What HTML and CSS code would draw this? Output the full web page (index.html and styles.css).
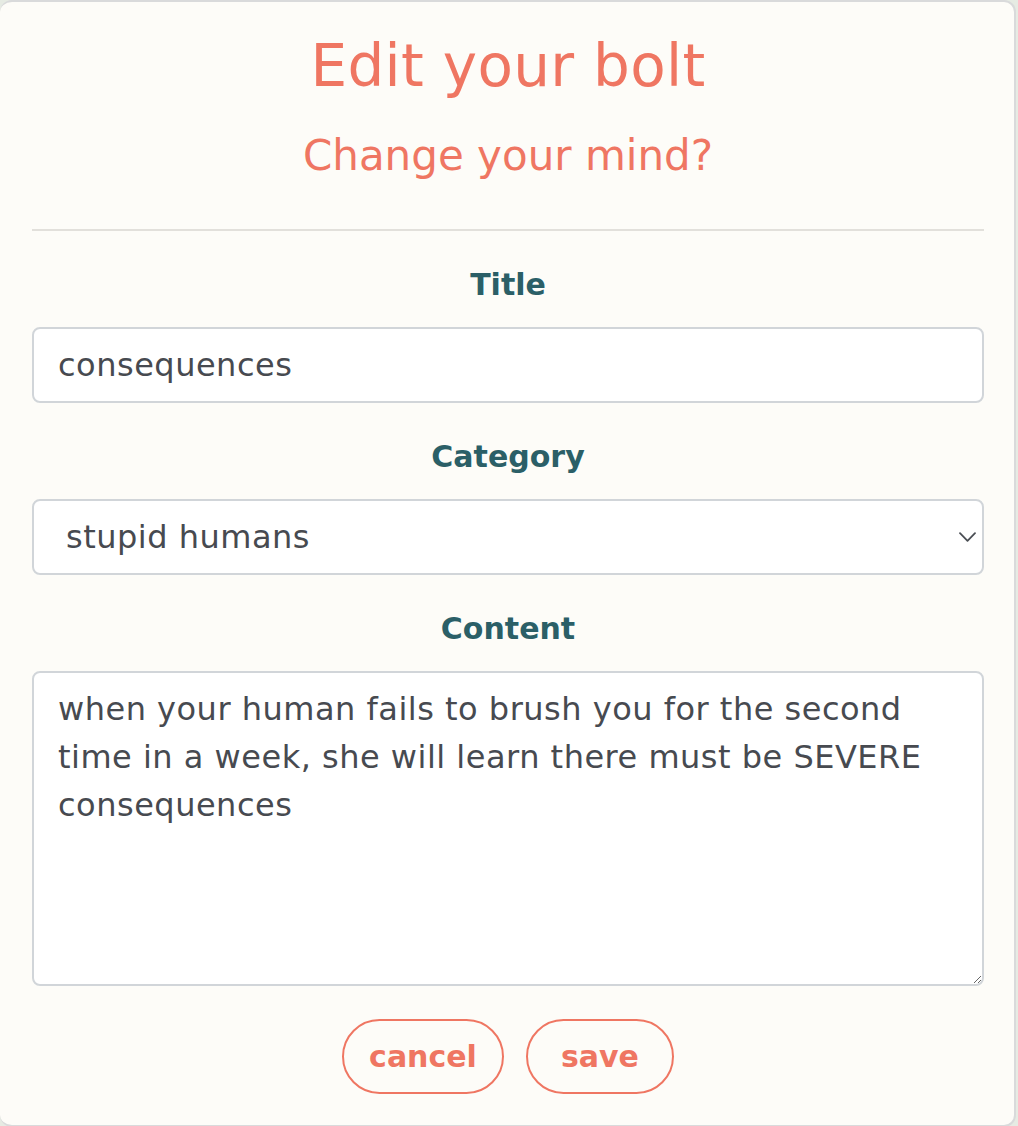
FILE: index.html
```html
<!DOCTYPE html>
<html lang="en">
<head>
<meta charset="utf-8">
<title>Edit your bolt</title>
<link rel="stylesheet" href="styles.css">
</head>
<body>
<div class="card">
  <header class="card-header">
    <h1 class="title">Edit your bolt</h1>
    <h2 class="subtitle">Change your mind?</h2>
  </header>
  <hr class="divider">
  <form class="form">
    <div class="group">
      <label class="label" for="title">Title</label>
      <input class="control input" id="title" type="text" value="consequences">
    </div>
    <div class="group">
      <label class="label" for="category">Category</label>
      <div class="select-wrap">
        <select class="control select" id="category">
          <option>stupid humans</option>
        </select>
        <svg class="chevron" width="17" height="10" viewBox="0 0 17 10"><polyline points="1,1.2 8.5,8.8 16,1.2" fill="none" stroke="#4a4e54" stroke-width="1.8" stroke-linecap="round" stroke-linejoin="round"/></svg>
      </div>
    </div>
    <div class="group">
      <label class="label" for="content">Content</label>
      <textarea class="control textarea" id="content">when your human fails to brush you for the second time in a week, she will learn there must be SEVERE consequences</textarea>
    </div>
    <div class="actions">
      <button type="button" class="btn">cancel</button>
      <button type="button" class="btn">save</button>
    </div>
  </form>
</div>
</body>
</html>
```
FILE: styles.css
```css
* { box-sizing: border-box; }
html, body {
  margin: 0;
  padding: 0;
  background: #e6ebe3;
}
body {
  font-family: "DejaVu Sans", "Liberation Sans", sans-serif;
  width: 1018px;
  height: 1126px;
  overflow: hidden;
}
.card {
  width: 1016px;
  background: #fdfcf8;
  border-top: 2px solid #d9dadb;
  border-right: 2px solid #d9dadb;
  border-bottom: 2px solid #d9dadb;
  border-radius: 12px;
  padding: 0 30px 31px 32px;
}
.card-header {
  display: flex;
  flex-direction: column;
  align-items: center;
  padding-top: 29px;
}
.title {
  margin: 0;
  font-size: 58px;
  line-height: 70px;
  font-weight: normal;
  color: #ef7662;
  letter-spacing: 0.3px;
}
.subtitle {
  margin: 30px 0 0;
  font-size: 42px;
  line-height: 50px;
  font-weight: normal;
  color: #ef7662;
}
.divider {
  margin: 48px 0 0;
  border: 0;
  height: 2px;
  background: #e2e0db;
}
.form {
  display: flex;
  flex-direction: column;
  padding-top: 30px;
}
.group {
  display: flex;
  flex-direction: column;
  margin-bottom: 30px;
}
.label {
  display: block;
  text-align: center;
  font-size: 30px;
  line-height: 48px;
  font-weight: bold;
  color: #2b5f67;
  margin-bottom: 18px;
}
.control {
  display: block;
  width: 100%;
  margin: 0;
  font-family: inherit;
  font-size: 32px;
  line-height: 48px;
  letter-spacing: 0.5px;
  color: #474a50;
  background: #ffffff;
  border: 2px solid #d1d5d9;
  border-radius: 8px;
  padding: 12px 24px;
  outline: none;
}
.input {
  height: 76px;
}
.select-wrap {
  position: relative;
}
.select {
  -webkit-appearance: none;
  appearance: none;
  height: 76px;
  padding-left: 32px;
}
.chevron {
  position: absolute;
  right: 8px;
  top: 33px;
}
.textarea {
  height: 315px;
  resize: vertical;
}
.actions {
  display: flex;
  justify-content: center;
  gap: 22px;
  margin-top: 3px;
}
.btn {
  font-family: inherit;
  font-size: 30px;
  line-height: 48px;
  height: 75px;
  font-weight: bold;
  color: #ef7662;
  background: transparent;
  border: 2px solid #ef7662;
  border-radius: 40px;
  padding: 0 25px;
  min-width: 148px;
}
```
